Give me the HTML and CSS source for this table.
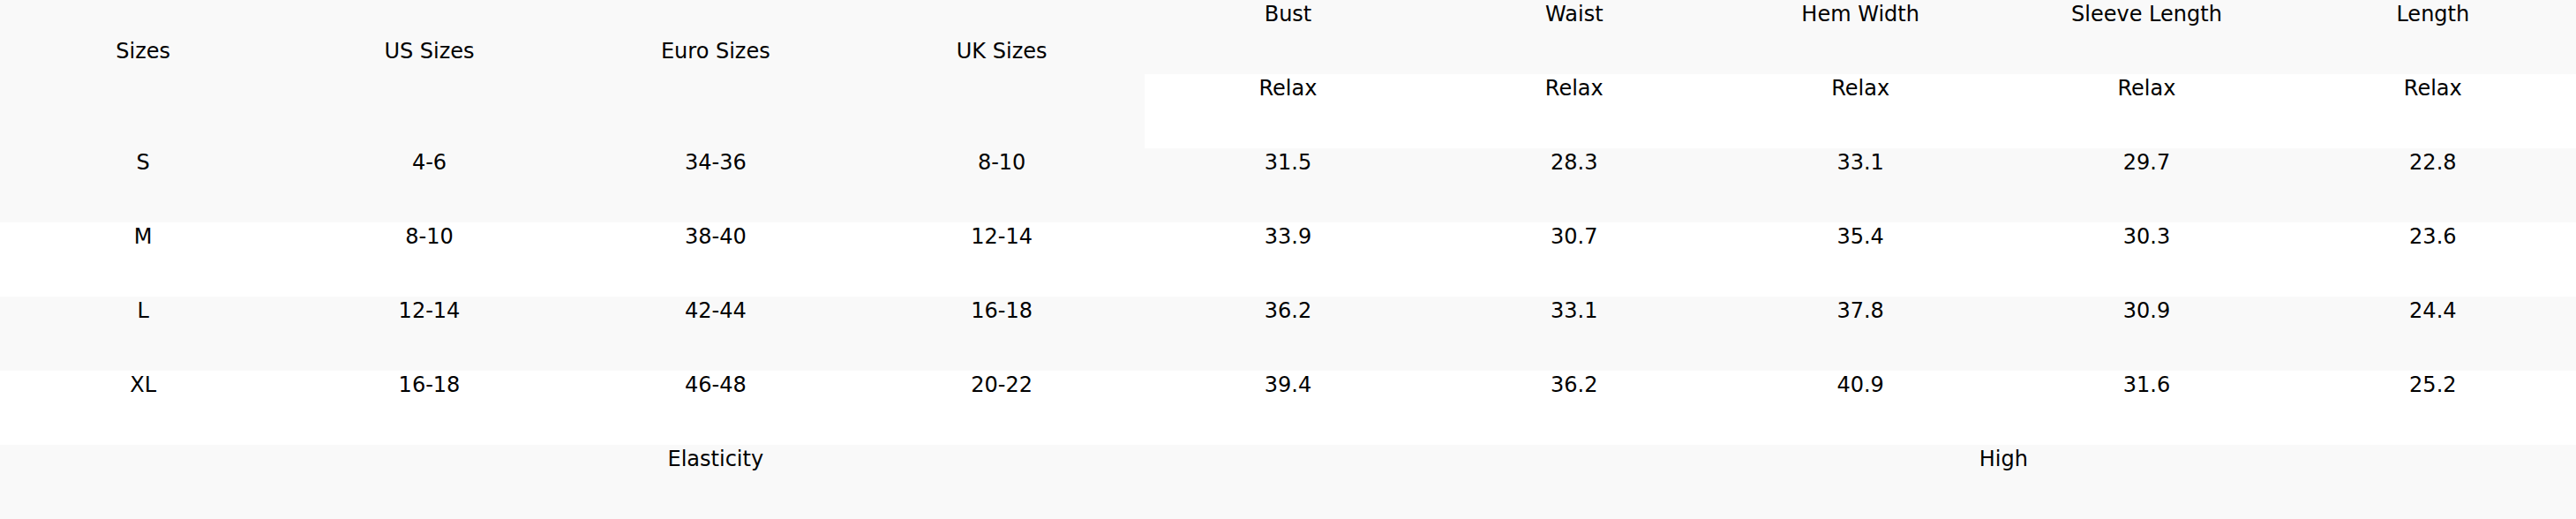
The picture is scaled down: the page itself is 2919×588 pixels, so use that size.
FILE: index.html
```html
<!DOCTYPE html>
<html lang="en">
<head>
<meta charset="utf-8">
<title>Size Chart</title>
<link rel="stylesheet" href="styles.css">
</head>
<body>
<table class="size-table">
  <colgroup>
    <col><col><col><col><col><col><col><col><col>
  </colgroup>
  <tbody>
    <tr class="row-alt">
      <td rowspan="2">Sizes</td>
      <td rowspan="2">US Sizes</td>
      <td rowspan="2">Euro Sizes</td>
      <td rowspan="2">UK Sizes</td>
      <td>Bust</td>
      <td>Waist</td>
      <td>Hem Width</td>
      <td>Sleeve Length</td>
      <td>Length</td>
    </tr>
    <tr>
      <td>Relax</td>
      <td>Relax</td>
      <td>Relax</td>
      <td>Relax</td>
      <td>Relax</td>
    </tr>
    <tr class="row-alt">
      <td>S</td><td>4-6</td><td>34-36</td><td>8-10</td><td>31.5</td><td>28.3</td><td>33.1</td><td>29.7</td><td>22.8</td>
    </tr>
    <tr>
      <td>M</td><td>8-10</td><td>38-40</td><td>12-14</td><td>33.9</td><td>30.7</td><td>35.4</td><td>30.3</td><td>23.6</td>
    </tr>
    <tr class="row-alt">
      <td>L</td><td>12-14</td><td>42-44</td><td>16-18</td><td>36.2</td><td>33.1</td><td>37.8</td><td>30.9</td><td>24.4</td>
    </tr>
    <tr>
      <td>XL</td><td>16-18</td><td>46-48</td><td>20-22</td><td>39.4</td><td>36.2</td><td>40.9</td><td>31.6</td><td>25.2</td>
    </tr>
    <tr class="row-alt">
      <td colspan="5">Elasticity</td>
      <td colspan="4">High</td>
    </tr>
  </tbody>
</table>
</body>
</html>
```

FILE: styles.css
```css
html, body {
  margin: 0;
  padding: 0;
  background: #ffffff;
}

body {
  font-family: "DejaVu Sans", "Liberation Sans", sans-serif;
  font-size: 24px;
  color: #000000;
}

.size-table {
  width: 100%;
  table-layout: fixed;
  border-collapse: collapse;
  border-spacing: 0;
}

.size-table td {
  padding: 2px 0 54px;
  text-align: center;
  vertical-align: middle;
  line-height: normal;
  border: 0;
}

.size-table tr {
  background: #ffffff;
}

.size-table .row-alt {
  background: #f9f9f9;
}
```
